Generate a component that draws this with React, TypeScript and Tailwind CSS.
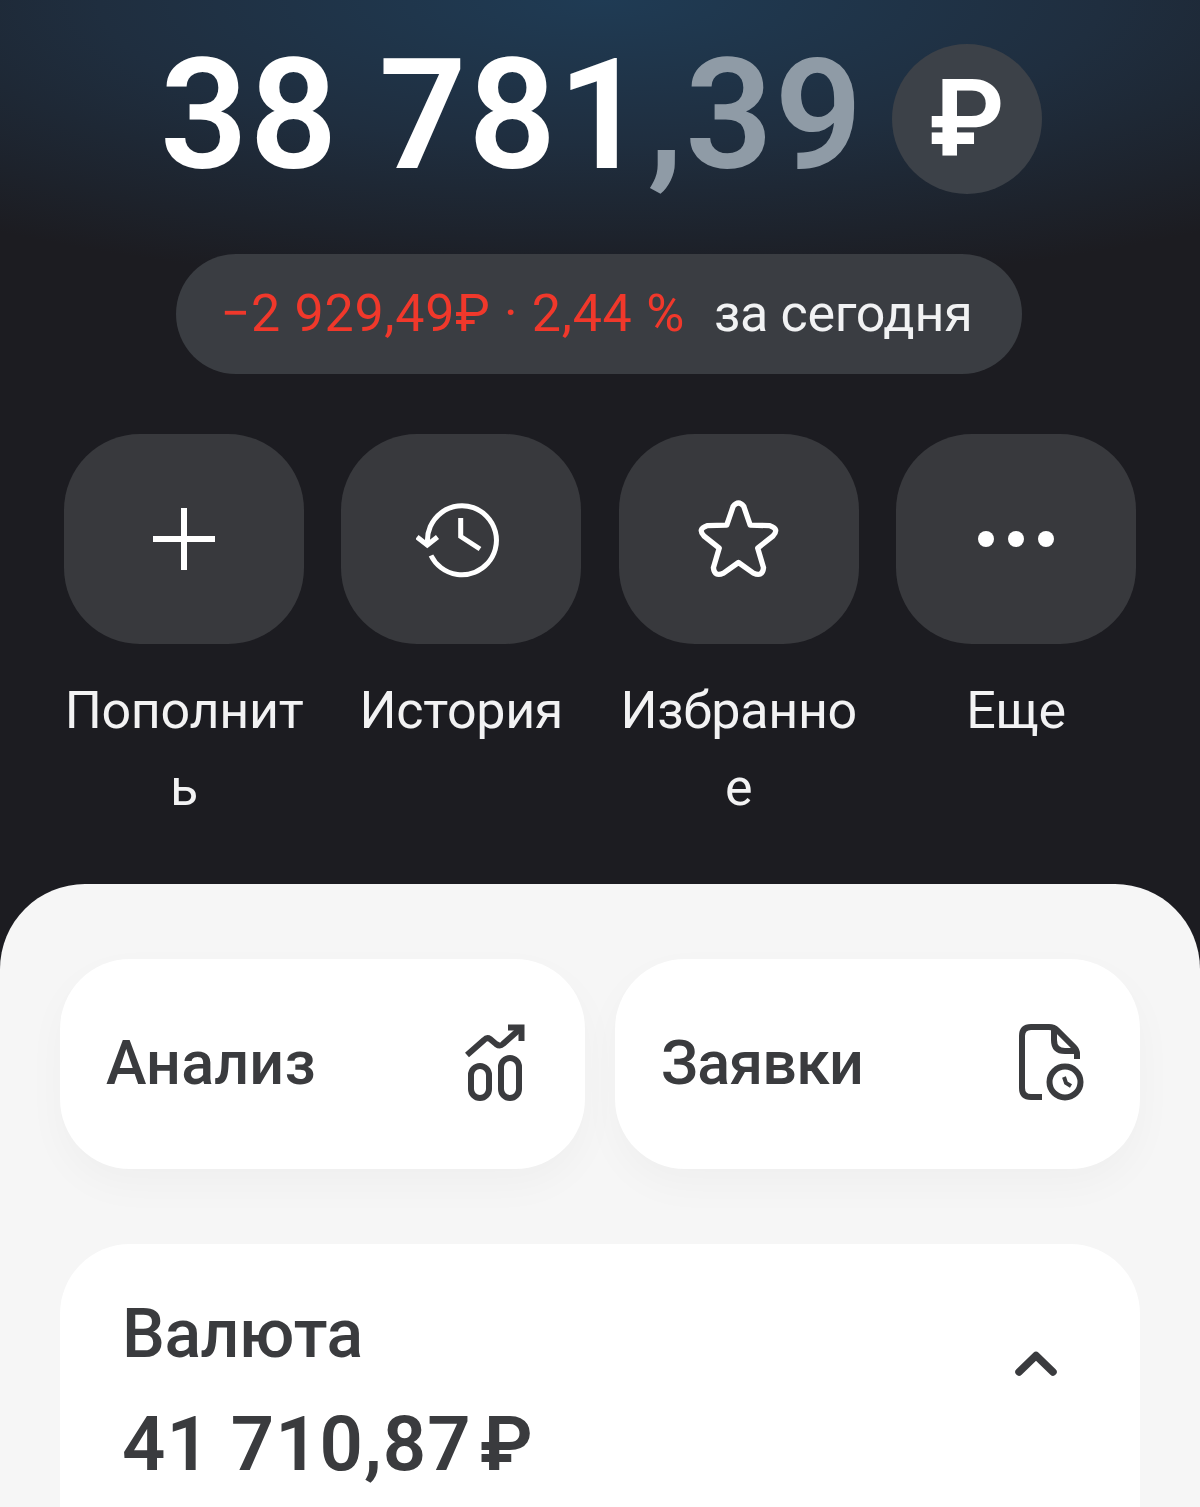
const actions = [
  { label: 'Пополнить', icon: <PlusIcon /> },
  { label: 'История', icon: <HistoryIcon /> },
  { label: 'Избранное', icon: <StarIcon /> },
  { label: 'Еще', icon: <DotsIcon /> }
];

function PlusIcon() {
  return (
    <svg width="90" height="90" viewBox="0 0 90 90" fill="none" stroke="#fff" strokeWidth="6">
      <path d="M14 45H76M45 14V76" />
    </svg>
  );
}

function HistoryIcon() {
  return (
    <svg width="90" height="90" viewBox="0 0 90 90" fill="none" stroke="#fff" strokeWidth="5">
      <path d="M11.5 48A34.5 34.5 0 1 1 15 61.5" />
      <path d="M1 43L11.3 51L21.5 43" />
      <path d="M44.7 24V42.5L64 55" />
    </svg>
  );
}

function StarIcon() {
  return (
    <svg width="96" height="96" viewBox="0 0 90 90" fill="none" stroke="#fff" strokeWidth="5" strokeLinejoin="round">
      <path d="M33.5 32L39.5 14.5Q44.5 8 49.5 14.5L55.5 32L74 32.5Q83 35.5 77 42L62.5 53.5L68 72Q67 81 58.5 77L44.5 67L30.5 77Q22 81 21 72L26.5 53.5L12 42Q6 35.5 15 32.5Z" />
    </svg>
  );
}

function DotsIcon() {
  return (
    <svg width="90" height="90" viewBox="0 0 90 90" fill="#fff">
      <circle cx="15" cy="45" r="8" />
      <circle cx="45" cy="45" r="8" />
      <circle cx="75" cy="45" r="8" />
    </svg>
  );
}

function ChartIcon() {
  return (
    <svg width="110" height="110" viewBox="0 0 110 110" fill="none" stroke="#3a3b3e" strokeWidth="6">
      <path d="M27 46L44 31Q47 28 50 30L56 35Q60 38 63 35L81 19" />
      <path d="M68 18.5H81.5V32" />
      <rect x="31" y="57" width="18" height="32" rx="9" />
      <rect x="61" y="49" width="18" height="40" rx="9" />
    </svg>
  );
}

function OrdersIcon() {
  return (
    <svg width="110" height="110" viewBox="0 0 110 110" fill="none" stroke="#3a3b3e" strokeWidth="6">
      <path d="M43 88H32Q23 88 23 79V27Q23 18 32 18H50Q55 18 58 21L75 38Q78 41 78 45V50" />
      <path d="M55 19V31Q55 42 66 42H78" />
      <circle cx="66" cy="73" r="15.5" />
      <path d="M65 68L67 74L72 77" strokeWidth="4" />
    </svg>
  );
}

export default function App() {
  return (
    <div className="h-[1507px] overflow-hidden bg-[#1c1c21] bg-[radial-gradient(ellipse_1000px_290px_at_50%_0%,#1f3b54_0%,#1f2e3f_50%,#1c1c21_100%)] font-['Roboto','Liberation_Sans',sans-serif]">
      <div className="flex items-center justify-center pt-[44px] pl-[2px]">
        <div className="pb-[6px] text-[154px] leading-[144px] font-semibold tracking-[1.5px] text-white">
          38 781<span className="text-[#8f9ba6]">,39</span>
        </div>
        <div className="ml-[28px] flex h-[150px] w-[150px] items-center justify-center rounded-full bg-[#3c4148] text-[108px] leading-none font-semibold text-white">
          ₽
        </div>
      </div>

      <div className="mt-[60px] ml-[176px] flex h-[120px] w-[846px] items-center justify-center rounded-[60px] bg-[#3a3d42] pr-[5px] text-[52px] leading-none">
        <span className="tracking-[0.7px] text-[#f0382b]">−2 929,49₽ · 2,44 %</span>
        <span className="ml-[29px] tracking-[-0.3px] text-[#f1f2f3]">за сегодня</span>
      </div>

      <div className="mt-[60px] flex h-[450px] justify-between px-[64px]">
        {actions.map((a) => (
          <div key={a.label} className="w-[240px]">
            <div className="flex h-[210px] items-center justify-center rounded-[76px] bg-[#38393d]">
              {a.icon}
            </div>
            <div className="mt-[28px] text-center text-[52px] leading-[77px] tracking-[-0.3px] break-all text-[#f2f2f3]">
              {a.label}
            </div>
          </div>
        ))}
      </div>

      <div className="h-[623px] overflow-hidden rounded-t-[85px] bg-[#f6f6f6] px-[60px] pt-[75px]">
        <div className="grid grid-cols-2 gap-[30px]">
          <div className="flex h-[210px] items-center justify-between rounded-[70px] bg-white pr-[35px] pl-[46px] shadow-[0_16px_40px_rgba(0,0,0,0.03)]">
            <span className="text-[61px] font-medium tracking-[0.2px] text-[#3a3b3e]">Анализ</span>
            <ChartIcon />
          </div>
          <div className="flex h-[210px] items-center justify-between rounded-[70px] bg-white pr-[31px] pl-[46px] shadow-[0_16px_40px_rgba(0,0,0,0.03)]">
            <span className="text-[61px] font-medium tracking-[-0.8px] text-[#3a3b3e]">Заявки</span>
            <OrdersIcon />
          </div>
        </div>

        <div className="mt-[75px] flex h-[400px] justify-between rounded-[70px] bg-white pt-[50px] pr-[83px] pl-[62px]">
          <div className="text-[#3a3b3e]">
            <div className="text-[68px] leading-[80px] font-medium tracking-[-0.5px]">Валюта</div>
            <div className="mt-[25px] text-[76px] leading-[90px] font-semibold tracking-[1px]">
              41 710,87<span className="ml-[8px]">₽</span>
            </div>
          </div>
          <svg className="mt-[56px]" width="42" height="26" viewBox="0 0 42 26" fill="none" stroke="#3a3b3e" strokeWidth="7.5" strokeLinecap="round" strokeLinejoin="round">
            <path d="M4 22L21 5.5L38 22" />
          </svg>
        </div>
      </div>
    </div>
  );
}
